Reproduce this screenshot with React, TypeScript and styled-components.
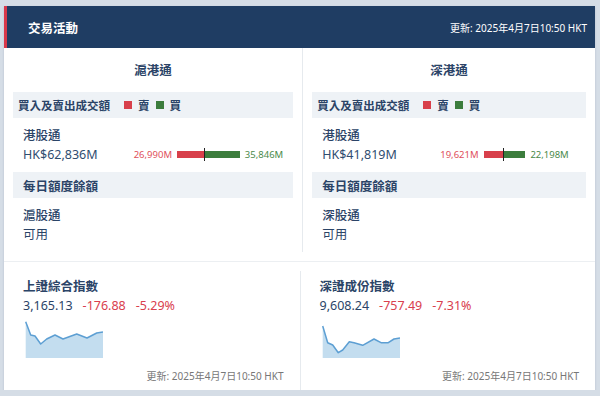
import styled, { createGlobalStyle } from 'styled-components';

const GlobalStyle = createGlobalStyle`
  html, body {
    margin: 0;
    background: #d5dde6;
  }
  body {
    padding: 6px 5px 0 4px;
    font-family: "Noto Sans", "Noto Sans CJK TC", sans-serif;
    color: #2b4467;
  }
`;

const Card = styled.div`
  background: #fff;
  box-shadow: 0 1px 2px rgba(40, 60, 90, 0.18);
`;

const Header = styled.div`
  height: 42px;
  background: #1f3d63;
  border-left: 3px solid #d8384a;
  display: flex;
  align-items: center;
  justify-content: space-between;
  padding: 0 8px 0 21px;
  color: #fff;
`;

const HeaderTitle = styled.div`
  font-size: 12.5px;
  font-weight: 700;
`;

const Updated = styled.div<{ muted?: boolean }>`
  font-size: 10px;
  color: ${({ muted }) => (muted ? '#777' : '#fff')};
  text-align: right;
`;

const TwoCols = styled.div`
  display: grid;
  grid-template-columns: 1fr 1fr;
`;

const Column = styled.div`
  padding: 0 9px;
  & + & {
    border-left: 1px solid #e6eaee;
  }
`;

const ColTitle = styled.div`
  text-align: center;
  font-size: 12.5px;
  font-weight: 700;
  line-height: 18px;
  padding: 14px 0 12px;
`;

const GrayRow = styled.div<{ small?: boolean }>`
  height: 26px;
  background: #eef2f6;
  display: flex;
  align-items: center;
  padding: 0 ${({ small }) => (small ? '5px' : '10px')};
  font-size: ${({ small }) => (small ? '11.5px' : '12.5px')};
  font-weight: 600;
`;

const Legend = styled.div`
  display: flex;
  align-items: center;
  gap: 6px;
  margin-left: 14px;
`;

const Swatch = styled.span<{ color: string }>`
  width: 8px;
  height: 8px;
  background: ${({ color }) => color};
`;

const Block = styled.div`
  padding: 8px 10px;
`;

const Line = styled.div`
  font-size: 12.5px;
  line-height: 19px;
`;

const Label = styled(Line)`
  font-weight: 500;
`;

const TradeRow = styled.div`
  display: flex;
  align-items: center;
`;

const Total = styled(Line)`
  width: 100px;
  color: #2f4d70;
`;

const BarHalf = styled.div<{ right?: boolean }>`
  display: flex;
  align-items: center;
  gap: 5px;
  width: ${({ right }) => (right ? 'auto' : '81px')};
  justify-content: ${({ right }) => (right ? 'flex-start' : 'flex-end')};
`;

const BarLabel = styled.span<{ color: string }>`
  font-size: 9.5px;
  color: ${({ color }) => color};
`;

const Bar = styled.span<{ color: string }>`
  height: 7px;
  background: ${({ color }) => color};
`;

const Marker = styled.span`
  width: 1px;
  height: 13px;
  background: #222;
  margin-right: -1px;
  position: relative;
  z-index: 1;
`;

const Separator = styled.div`
  height: 1px;
  background: #eceff2;
  margin: 9px 0;
`;

const IndexCol = styled.div`
  padding: 7px 16px 7px 19px;
  & + & {
    border-left: 1px solid #e6eaee;
  }
`;

const IndexName = styled.div`
  font-size: 12.5px;
  font-weight: 600;
  line-height: 18px;
`;

const Quote = styled.div`
  display: flex;
  gap: 10px;
  font-size: 12.5px;
  line-height: 20px;
`;

const Down = styled.span`
  color: #d9404e;
`;

const Spark = styled.svg`
  display: block;
  margin: 5px 0 10px 2px;
`;

const RED = '#d8404b';
const GREEN = '#3c7d3d';

const connects = [
  { title: '滬港通', total: 'HK$62,836M', sell: 26990, buy: 35846, quota: '滬股通' },
  { title: '深港通', total: 'HK$41,819M', sell: 19621, buy: 22198, quota: '深股通' },
];

const indices = [
  {
    name: '上證綜合指數',
    value: '3,165.13',
    change: '-176.88',
    pct: '-5.29%',
    pts: [[0.7, 0.7], [5.7, 14], [10, 15], [15.7, 23], [21.7, 18], [30, 14], [38, 18], [51.7, 13], [62, 17], [71.7, 12], [78, 11]],
  },
  {
    name: '深證成份指數',
    value: '9,608.24',
    change: '-757.49',
    pct: '-7.31%',
    pts: [[0.7, 5], [5.7, 21.7], [10.7, 24], [16.3, 31.7], [20.7, 29], [27.3, 20.7], [32, 21.7], [40.7, 24.3], [52, 18], [59, 21.7], [66.3, 21.7], [72, 18], [78, 17]],
  },
];

const fmt = (n: number) => n.toLocaleString('en-US') + 'M';

function Sparkline({ pts }: { pts: number[][] }) {
  const line = pts.map(([x, y]) => `${x},${y}`).join(' ');
  const area = `${line} 78,37 0.7,37`;
  return (
    <Spark width="78" height="37" viewBox="0 0 78 37">
      <polygon points={area} fill="#c3ddef" />
      <polyline points={line} fill="none" stroke="#5d9fd3" strokeWidth="1.5" strokeLinejoin="round" />
    </Spark>
  );
}

export default function App() {
  const stamp = '更新: 2025年4月7日10:50 HKT';
  return (
    <>
      <GlobalStyle />
      <Card>
        <Header>
          <HeaderTitle>交易活動</HeaderTitle>
          <Updated>{stamp}</Updated>
        </Header>

        <TwoCols>
          {connects.map((c) => (
            <Column key={c.title}>
              <ColTitle>{c.title}</ColTitle>
              <GrayRow small>
                買入及賣出成交額
                <Legend>
                  <Swatch color={RED} />
                  <span>賣</span>
                  <Swatch color={GREEN} />
                  <span>買</span>
                </Legend>
              </GrayRow>
              <Block>
                <Label>港股通</Label>
                <TradeRow>
                  <Total>{c.total}</Total>
                  <BarHalf>
                    <BarLabel color="#e0505c">{fmt(c.sell)}</BarLabel>
                    <Bar color={RED} style={{ width: c.sell / 1000 }} />
                  </BarHalf>
                  <Marker />
                  <BarHalf right>
                    <Bar color={GREEN} style={{ width: c.buy / 1000 }} />
                    <BarLabel color="#4a8a4a">{fmt(c.buy)}</BarLabel>
                  </BarHalf>
                </TradeRow>
              </Block>
              <GrayRow>每日額度餘額</GrayRow>
              <Block>
                <Label>{c.quota}</Label>
                <Line>可用</Line>
              </Block>
            </Column>
          ))}
        </TwoCols>

        <Separator />

        <TwoCols>
          {indices.map((ix) => (
            <IndexCol key={ix.name}>
              <IndexName>{ix.name}</IndexName>
              <Quote>
                <span>{ix.value}</span>
                <Down>{ix.change}</Down>
                <Down>{ix.pct}</Down>
              </Quote>
              <Sparkline pts={ix.pts} />
              <Updated muted>{stamp}</Updated>
            </IndexCol>
          ))}
        </TwoCols>
      </Card>
    </>
  );
}
